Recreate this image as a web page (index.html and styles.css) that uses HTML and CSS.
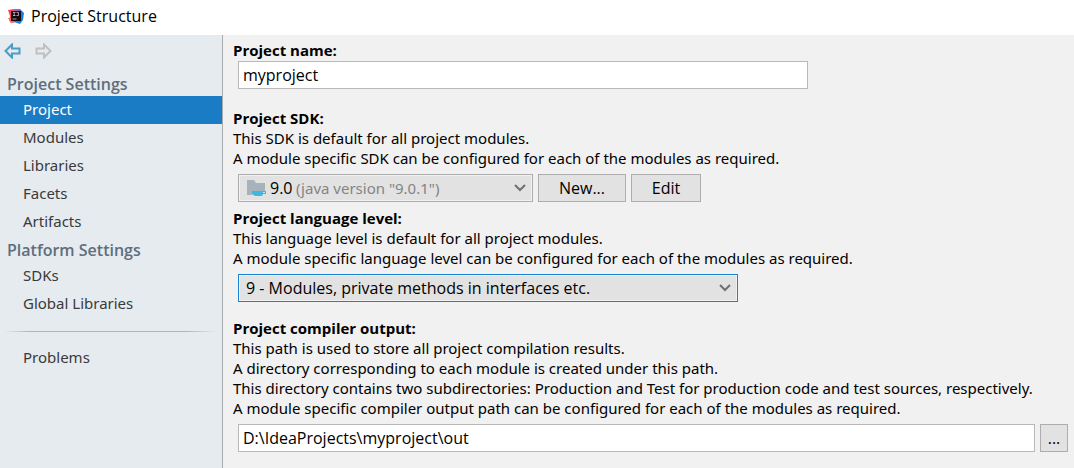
FILE: index.html
```html
<!DOCTYPE html>
<html lang="en">
<head>
<meta charset="utf-8">
<title>Project Structure</title>
<link rel="stylesheet" href="styles.css">
</head>
<body>
<header class="titlebar">
  <svg class="logo" viewBox="0 0 16 16" aria-hidden="true">
    <path d="M0 2l6-1 3 4-2 9-4 1-2-3 1-4z" fill="#fc3f64"/>
    <path d="M0 10l4 0 4 4-5 1z" fill="#f5705c"/>
    <path d="M9 1l3 0 4 4-1 7-3 4-6-2z" fill="#1480ee"/>
    <path d="M6 1l5 0 2 2-6 1z" fill="#a65bc4"/>
    <rect x="3" y="3" width="10" height="10" fill="#15090d"/>
    <path d="M5 4.500h2.500M6.200 4.500v3.500M5 7.500h2.500M8.500 4.500h2v3h-2M4.500 11h4" fill="none" stroke="#ddd" stroke-width=".7"/>
  </svg>
  <h1 class="title">Project Structure</h1>
</header>
<div class="layout">
  <aside class="sidebar">
    <div class="history">
      <button class="arrow arrow-back" type="button" aria-label="Back">
        <svg viewBox="0 0 17 16" aria-hidden="true"><path d="M1.500 8L8 1.500v4h7.500v5H8v4z"/></svg>
      </button>
      <button class="arrow arrow-forward" type="button" aria-label="Forward" disabled>
        <svg viewBox="0 0 17 16" aria-hidden="true"><path d="M15.500 8L9 1.500v4H1.500v5H9v4z"/></svg>
      </button>
    </div>
    <nav>
      <h2 class="group">Project Settings</h2>
      <a class="item item-active" href="#project" aria-current="page">Project</a>
      <a class="item" href="#modules">Modules</a>
      <a class="item" href="#libraries">Libraries</a>
      <a class="item" href="#facets">Facets</a>
      <a class="item" href="#artifacts">Artifacts</a>
      <h2 class="group">Platform Settings</h2>
      <a class="item" href="#sdks">SDKs</a>
      <a class="item" href="#global">Global Libraries</a>
      <hr class="divider">
      <a class="item" href="#problems">Problems</a>
    </nav>
  </aside>
  <main class="content" id="project">
    <section class="section">
      <label class="label" for="name">Project name:</label>
      <div class="controls"><input class="field field-name" id="name" type="text" value="myproject"></div>
    </section>
    <section class="section section-sdk">
      <label class="label" for="sdk">Project SDK:</label>
      <p class="text">This SDK is default for all project modules.</p>
      <p class="text">A module specific SDK can be configured for each of the modules as required.</p>
      <div class="controls">
        <div class="combo combo-sdk">
          <select class="select" id="sdk"><option>9.0</option></select>
          <span class="sdk-icon">
            <svg viewBox="0 0 20 18" aria-hidden="true">
              <path d="M0 1h7l2 3h9v8H5v4H0z" fill="#a7b3bb"/>
              <path d="M5 12h14v3h-3l-1 2H8l-3-2z" fill="#40b6e0"/>
              <path d="M16 13h2v1h-2z" fill="#e2e2e2"/>
            </svg>
          </span>
          <span class="version">(java version "9.0.1")</span>
          <svg class="chevron" viewBox="0 0 12 8" aria-hidden="true"><path d="M1 1l5 5 5-5"/></svg>
        </div>
        <button class="button" type="button">New...</button>
        <button class="button button-edit" type="button">Edit</button>
      </div>
    </section>
    <section class="section">
      <label class="label" for="level">Project language level:</label>
      <p class="text">This language level is default for all project modules.</p>
      <p class="text">A module specific language level can be configured for each of the modules as required.</p>
      <div class="controls">
        <div class="combo combo-level">
          <select class="select" id="level"><option>9 - Modules, private methods in interfaces etc.</option></select>
          <svg class="chevron" viewBox="0 0 12 8" aria-hidden="true"><path d="M1 1l5 5 5-5"/></svg>
        </div>
      </div>
    </section>
    <section class="section section-output">
      <label class="label" for="output">Project compiler output:</label>
      <p class="text">This path is used to store all project compilation results.</p>
      <p class="text">A directory corresponding to each module is created under this path.</p>
      <p class="text">This directory contains two subdirectories: Production and Test for production code and test sources, respectively.</p>
      <p class="text">A module specific compiler output path can be configured for each of the modules as required.</p>
      <div class="controls">
        <input class="field" id="output" type="text" value="D:\IdeaProjects\myproject\out">
        <button class="button button-browse" type="button" aria-label="Browse">...</button>
      </div>
    </section>
  </main>
</div>
</body>
</html>
```
FILE: styles.css
```css
* {
  box-sizing: border-box;
}

body {
  margin: 0;
  min-height: 100vh;
  display: flex;
  flex-direction: column;
  background: #f1f1f1;
  color: #000;
  font: 15px/20px "Noto Sans", "Open Sans", sans-serif;
}

h1,
h2,
p {
  margin: 0;
}

button,
input,
select {
  color: inherit;
  font: 16px/20px "Open Sans", "Noto Sans", sans-serif;
  border-radius: 0;
}

.titlebar {
  display: flex;
  align-items: center;
  gap: 7px;
  height: 35px;
  padding: 0 8px 3px;
  background: #fff;
}

.logo {
  width: 16px;
  height: 16px;
}

.title {
  font: 16px/20px "Open Sans", "Noto Sans", sans-serif;
}

.layout {
  display: flex;
  flex: 1;
}

.sidebar {
  flex: 0 0 223px;
  background: #e5ebef;
  border-right: 1px solid #a9acae;
  color: #3a3a3a;
}

.history {
  display: flex;
  gap: 14px;
  height: 35px;
  padding: 8px 4px;
}

.arrow {
  width: 17px;
  height: 16px;
  padding: 0;
  border: 0;
  background: none;
}

.arrow svg {
  display: block;
  fill: none;
  stroke-width: 2;
}

.arrow-back {
  color: #4a9cc9;
}

.arrow-forward {
  color: #c0c0c0;
}

.arrow path {
  stroke: currentColor;
}

.group {
  height: 26px;
  padding: 4px 7px 0;
  color: #5f6e7d;
  font: 600 16px/20px "Open Sans", "Noto Sans", sans-serif;
}

.item {
  display: block;
  padding: 3px 23px 5px;
  color: inherit;
  text-decoration: none;
}

.item-active {
  background: #1a7cc4;
  color: #fff;
}

.divider {
  height: 1px;
  margin: 13px 4px 12px;
  border: 0;
  background: linear-gradient(to right, transparent, #b0b4b7 12%, #b0b4b7 85%, transparent);
}

.content {
  flex: 1;
  min-width: 0;
  padding: 5px 6px 16px 10px;
}

.section {
  margin-bottom: 6px;
}

.section-sdk {
  margin-top: 19px;
}

.section-output {
  margin-top: 16px;
}

.label {
  display: block;
  font-family: "Open Sans", "Noto Sans", sans-serif;
  font-weight: 700;
}

.text {
  white-space: nowrap;
}

.controls {
  display: flex;
  gap: 5px;
  padding: 6px 0 0 5px;
}

.section:first-child .controls {
  padding-top: 1px;
}

.field {
  flex: 1;
  min-width: 0;
  height: 28px;
  padding: 0 4px;
  border: 1px solid #b8b8b8;
  background: #fff;
}

.field-name {
  max-width: 570px;
}

.combo {
  position: relative;
  height: 28px;
}

.combo-sdk {
  width: 295px;
}

.combo-level {
  width: 500px;
}

.select {
  width: 100%;
  height: 100%;
  padding: 0 7px;
  border: 1px solid #adadad;
  background: #e2e2e2;
  box-shadow: inset 0 0 0 1px #f1f1f1;
  appearance: none;
}

.combo-sdk .select {
  padding-left: 31px;
}

.combo-level .select {
  border-color: #1883d0;
}

.sdk-icon,
.version,
.chevron {
  position: absolute;
  pointer-events: none;
}

.sdk-icon {
  top: 5px;
  left: 9px;
  width: 20px;
  height: 18px;
}

.sdk-icon svg {
  display: block;
}

.version {
  top: 4px;
  left: 58px;
  color: #848484;
}

.chevron {
  top: 10px;
  right: 7px;
  width: 12px;
  height: 8px;
  fill: none;
  stroke: #707070;
  stroke-width: 2;
}

.button {
  width: 88px;
  height: 28px;
  padding: 0;
  border: 1px solid #adadad;
  background: #e2e2e2;
}

.button-edit {
  width: 70px;
}

.button-browse {
  width: 28px;
}
```
